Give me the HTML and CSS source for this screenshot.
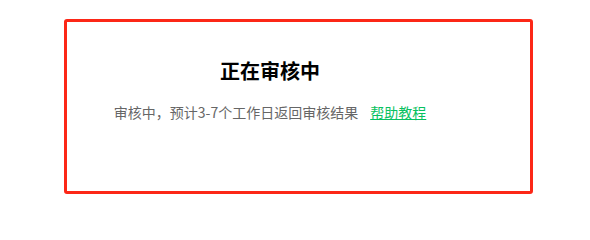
FILE: index.html
```html
<!DOCTYPE html>
<html lang="zh-CN">
<head>
<meta charset="utf-8">
<title>正在审核中</title>
<link rel="stylesheet" href="styles.css">
</head>
<body>
<div class="page">
  <section class="review-box">
    <div class="review-content">
      <h1 class="review-title">正在审核中</h1>
      <p class="review-desc">审核中，预计3-7个工作日返回审核结果<a class="help-link" href="#">帮助教程</a></p>
    </div>
  </section>
</div>
</body>
</html>
```
FILE: styles.css
```css
html, body {
  margin: 0;
  padding: 0;
  background: #ffffff;
}
body {
  font-family: "Noto Sans CJK SC", "Microsoft YaHei", sans-serif;
}
.page {
  padding: 19px 0 0 64px;
}
.review-box {
  box-sizing: border-box;
  width: 469px;
  height: 175px;
  border: 3px solid #fc2717;
  border-radius: 3px;
  padding: 35px 57px 0 0;
}
.review-content {
  display: flex;
  flex-direction: column;
  align-items: center;
}
.review-title {
  margin: 0;
  font-size: 20px;
  line-height: 28px;
  font-weight: 700;
  color: #000000;
}
.review-desc {
  margin: 17px 0 0;
  font-size: 14px;
  line-height: 20px;
  color: #666666;
}
.help-link {
  margin-left: 12px;
  color: #07c160;
  text-decoration: underline;
}
```
